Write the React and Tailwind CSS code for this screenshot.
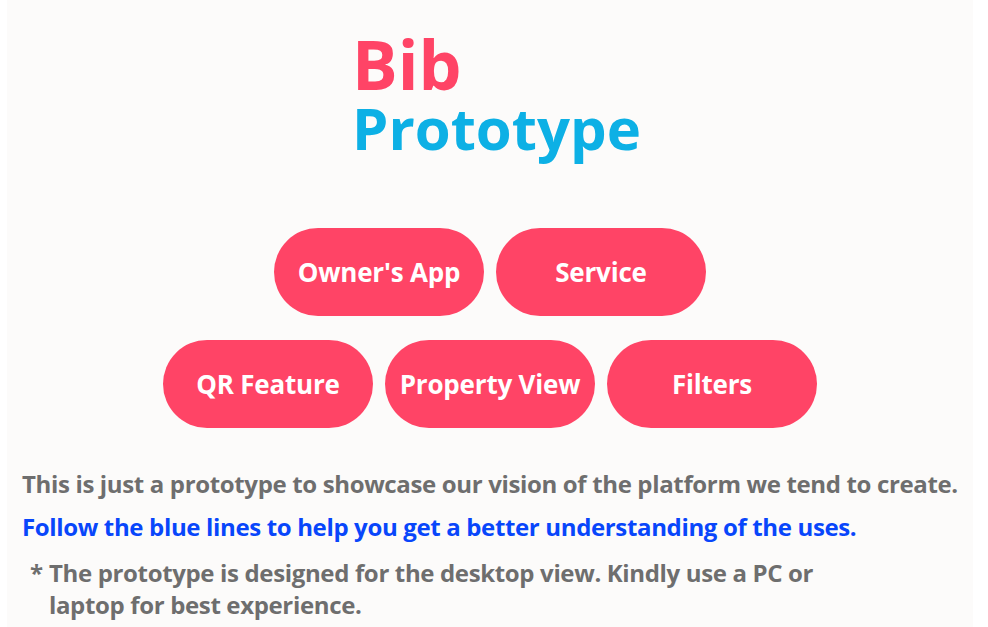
import React from 'react';

const rows = [
  ["Owner's App", 'Service'],
  ['QR Feature', 'Property View', 'Filters'],
];

export default function App() {
  return (
    <div className="h-[627px] w-full bg-white overflow-hidden" style={{ fontFamily: '"Open Sans", "Noto Sans", sans-serif' }}>
      <div className="ml-[7px] w-[966px] h-full bg-[#fcfbfa] flex flex-col">
        {/* Title */}
        <div className="pl-[345px] pt-[30px] font-bold">
          <div className="text-[#ff4466] text-[68px] leading-[68px]">Bib</div>
          <div className="text-[#0db0e5] text-[58px] leading-[60px]">Prototype</div>
        </div>

        {/* Buttons */}
        <div className="mt-[70px] flex flex-col items-center gap-[24px]">
          {rows.map((row, i) => (
            <div key={i} className="flex gap-[12px]">
              {row.map((label) => (
                <button
                  key={label}
                  className="w-[210px] h-[88px] rounded-full bg-[#ff4466] text-white font-bold text-[26px] tracking-[-0.2px]"
                >
                  {label}
                </button>
              ))}
            </div>
          ))}
        </div>

        {/* Notes */}
        <div className="mt-[40px] pl-[15px] font-bold text-[24px] leading-[32px] tracking-[-0.35px]">
          <p className="text-[#6e6e6e]">This is just a prototype to showcase our vision of the platform we tend to create.</p>
          <p className="mt-[11px] text-[#0846fb]">Follow the blue lines to help you get a better understanding of the uses.</p>
          <div className="mt-[14px] ml-[8px] flex text-[#6e6e6e]">
            <span className="w-[19px] shrink-0">*</span>
            <span className="w-[795px]">The prototype is designed for the desktop view. Kindly use a PC or laptop for best experience.</span>
          </div>
        </div>
      </div>
    </div>
  );
}
